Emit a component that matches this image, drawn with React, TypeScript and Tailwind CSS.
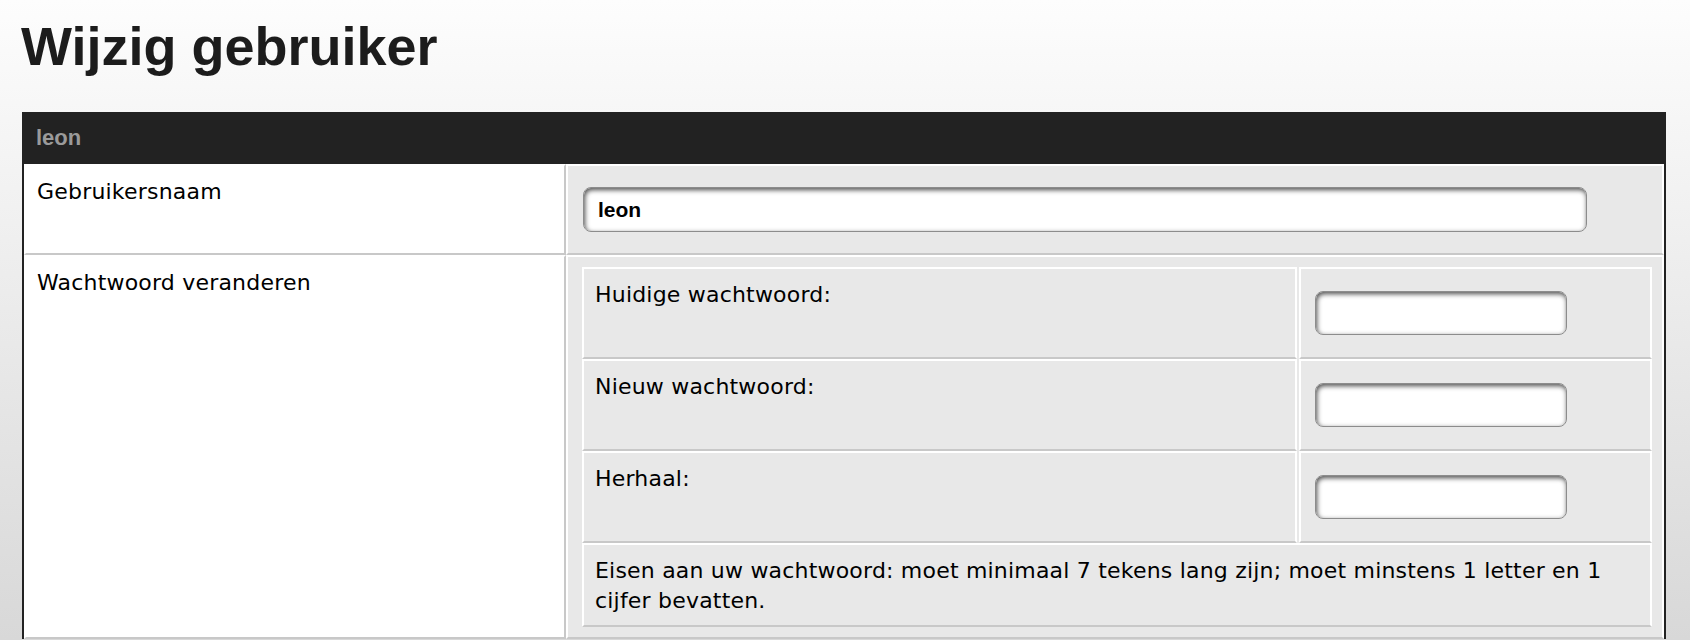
import React from "react"

const body = "font-['DejaVu_Sans','Verdana',sans-serif] text-[22px] leading-[30px] tracking-[0.2px] text-black"

const fieldClass =
  "block h-[44px] rounded-[8px] border border-[#8c8c8c] bg-white shadow-[inset_1px_2px_5px_rgba(0,0,0,0.7)] outline-none"

const passwordRows = [
  { label: "Huidige wachtwoord:", name: "current" },
  { label: "Nieuw wachtwoord:", name: "new" },
  { label: "Herhaal:", name: "repeat" },
]

const App = () => {
  return (
    <div className="min-h-[640px] w-full bg-linear-to-b from-[#fdfdfd] to-[#d8d8d8]">
      {/* Page title */}
      <div className="h-[112px] pl-[21px] pt-[19px]">
        <h1 className="font-['Liberation_Sans','Arial',sans-serif] text-[54px] leading-none font-bold text-[#1c1c1c]">
          Wijzig gebruiker
        </h1>
      </div>

      <div className="ml-[22px] w-[1644px] border-x-2 border-[#222222]">
        {/* Table header */}
        <div className="h-[52px] bg-[#222222] pl-[12px] font-['Liberation_Sans','Arial',sans-serif] text-[22px] leading-[52px] font-bold text-[#9a9a9a]">
          leon
        </div>

        {/* Gebruikersnaam */}
        <div className="flex">
          <div
            className={`w-[542px] shrink-0 border-2 border-white border-r-[#c8c8c8] border-b-[#c8c8c8] bg-white pl-[11px] pt-[11px] ${body}`}
          >
            Gebruikersnaam
          </div>
          <div className="flex-1 border-2 border-white border-b-[#c8c8c8] bg-[#e8e8e8] pl-[15px] py-[21px]">
            <input
              defaultValue="leon"
              readOnly
              className={`${fieldClass} h-[45px] w-[1004px] pl-[14px] font-['Liberation_Sans','Arial',sans-serif] text-[21px] font-bold text-black`}
            />
          </div>
        </div>

        {/* Wachtwoord veranderen */}
        <div className="flex">
          <div
            className={`w-[542px] shrink-0 border-2 border-white border-r-[#c8c8c8] border-b-[#c8c8c8] bg-white pl-[11px] pt-[11px] ${body}`}
          >
            Wachtwoord veranderen
          </div>
          <div className="flex-1 border-2 border-white border-b-[#c8c8c8] bg-[#e8e8e8] pl-[14px] pr-[10px] py-[10px]">
            <div className="w-[1070px]">
              {passwordRows.map((row) => (
                <div key={row.name} className="flex h-[92px] gap-[2px]">
                  <div
                    className={`w-[715px] shrink-0 border-2 border-white border-b-[#c8c8c8] pl-[11px] pt-[11px] ${body}`}
                  >
                    {row.label}
                  </div>
                  <div className="flex-1 border-2 border-white border-b-[#c8c8c8] pl-[14px] pt-[22px]">
                    <input type="password" name={row.name} className={`${fieldClass} w-[252px]`} />
                  </div>
                </div>
              ))}
              <div
                className={`h-[84px] border-2 border-white border-b-[#c8c8c8] pl-[11px] pr-[11px] pt-[11px] ${body}`}
              >
                Eisen aan uw wachtwoord: moet minimaal 7 tekens lang zijn; moet minstens 1 letter en 1 cijfer
                bevatten.
              </div>
            </div>
          </div>
        </div>
      </div>
    </div>
  )
}

export default App
